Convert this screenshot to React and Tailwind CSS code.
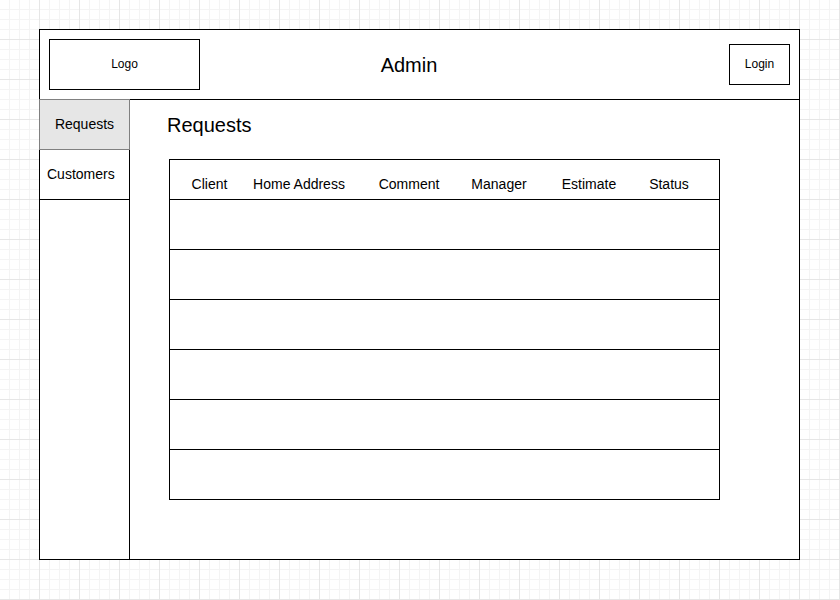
import React from 'react';

const columns = ['Client', 'Home Address', 'Comment', 'Manager', 'Estimate', 'Status'];
const rows = [1, 2, 3, 4, 5, 6];

const App = () => {
    return (
        <div
            className="w-[840px] h-[600px] pl-[39px] pt-[29px] bg-white bg-[image:linear-gradient(to_right,transparent_39px,#e6e6e6_39px),linear-gradient(to_bottom,transparent_39px,#e6e6e6_39px),linear-gradient(to_right,transparent_9px,#f4f4f4_9px),linear-gradient(to_bottom,transparent_9px,#f4f4f4_9px)] bg-[size:40px_40px,40px_40px,10px_10px,10px_10px] font-['Liberation_Sans',Arial,sans-serif] text-black"
        >
            <div className="w-[761px] h-[531px] bg-white border border-black flex flex-col">
                {/* Header */}
                <header className="h-[70px] shrink-0 border-b border-black flex items-center px-[9px]">
                    <div className="w-[151px] h-[51px] border border-black flex items-center justify-center text-[12px] leading-[14px] pb-px">
                        Logo
                    </div>
                    <div className="w-[100px] ml-[159px] text-center text-[20px] leading-[24px]">Admin</div>
                    <div className="ml-auto w-[61px] h-[41px] border border-black flex items-center justify-center text-[12px] leading-[14px] pb-px">
                        Login
                    </div>
                </header>

                <div className="flex flex-1">
                    {/* Sidebar */}
                    <aside className="w-[90px] shrink-0 border-r border-black flex flex-col text-[14px]">
                        <div className="w-[91px] h-[51px] -mt-px -ml-px bg-[#e6e6e6] border border-[#808080] flex items-center justify-center">
                            Requests
                        </div>
                        <div className="h-[50px] border-b border-black flex items-center pl-[7px]">
                            Customers
                        </div>
                    </aside>

                    {/* Content */}
                    <main className="flex-1 pl-[39px]">
                        <h1 className="mt-[13px] -ml-[2px] text-[20px] leading-[24px]">Requests</h1>
                        <div className="mt-[22px] w-[551px] border-t border-l border-r border-black">
                            <div className="h-[40px] border-b border-black grid grid-cols-[79px_100px_120px_60px_120px_40px] items-center pt-[9px] text-[14px]">
                                {columns.map((c) => (
                                    <div key={c} className="text-center whitespace-nowrap">{c}</div>
                                ))}
                            </div>
                            {rows.map((r) => (
                                <div key={r} className="h-[50px] border-b border-black"></div>
                            ))}
                        </div>
                    </main>
                </div>
            </div>
        </div>
    );
};

export default App;
